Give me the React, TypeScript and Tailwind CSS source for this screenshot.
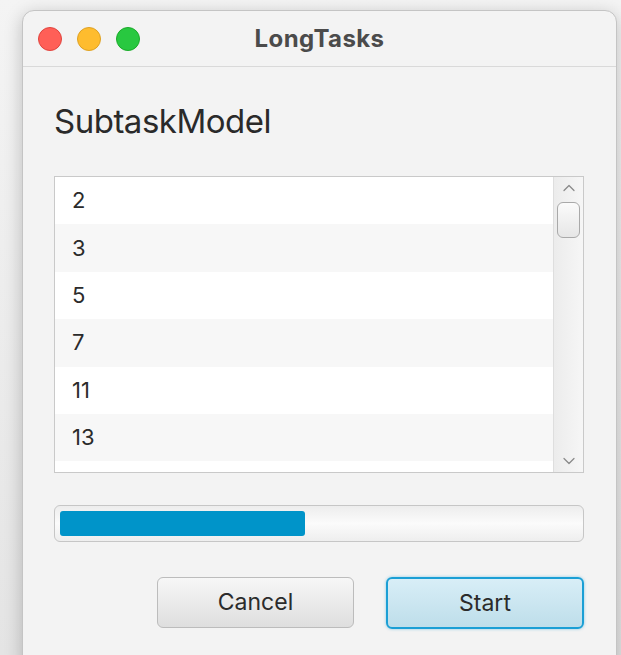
import { ChevronDown, ChevronUp } from 'lucide-react';

const primes = [2, 3, 5, 7, 11, 13];

function TrafficLights() {
  return (
    <div className="flex items-center gap-[15px]">
      <span className="h-6 w-6 rounded-full border border-[#e0443e] bg-[#ff5f57]" />
      <span className="h-6 w-6 rounded-full border border-[#dea123] bg-[#febc2e]" />
      <span className="h-6 w-6 rounded-full border border-[#1aab29] bg-[#28c840]" />
    </div>
  );
}

function PrimeList() {
  return (
    <div className="flex h-[297px] overflow-hidden border border-[#c9c9c9] bg-white">
      <div className="flex-1 overflow-hidden">
        {primes.map((p, i) => (
          <div
            key={p}
            className={`flex h-[47.4px] shrink-0 items-center pl-[17px] text-[22px] text-[#2b2b2b] ${
              i % 2 === 0 ? 'bg-white' : 'bg-[#f7f7f7]'
            }`}
          >
            {p}
          </div>
        ))}
      </div>
      {/* vertical scroll bar */}
      <div className="flex w-[30px] flex-col items-center border-l border-[#dedede] bg-gradient-to-r from-[#ececec] to-[#f6f6f6]">
        <ChevronUp className="mt-[1px] h-5 w-5 text-[#8a8a8a]" strokeWidth={1.5} />
        <div className="mt-[4px] h-[36px] w-[23px] rounded-[6px] border border-[#a9a9a9] bg-gradient-to-b from-[#fbfbfb] to-[#e6e6e6]" />
        <div className="flex-1" />
        <ChevronDown className="mb-[1px] h-5 w-5 text-[#8a8a8a]" strokeWidth={1.5} />
      </div>
    </div>
  );
}

function ProgressBar({ value }: { value: number }) {
  return (
    <div className="h-[37px] rounded-[6px] border border-[#c6c6c6] bg-gradient-to-b from-[#ededed] via-[#fbfbfb] to-[#eeeeee] p-[5px]">
      <div className="h-full rounded-[3px] bg-[#0094c9]" style={{ width: `${value * 100}%` }} />
    </div>
  );
}

export default function App() {
  return (
    <div
      className="h-[655px] w-[621px] overflow-hidden bg-gradient-to-b from-[#f4f4f4] to-[#e4e4e4] pl-[22px] pr-[4px] pt-[10px]"
      style={{ fontFamily: 'Inter, "Liberation Sans", sans-serif' }}
    >
      <div className="flex h-[660px] flex-col rounded-[12px] border border-[#c4c4c4] bg-[#f3f3f3] shadow-[0_4px_18px_rgba(0,0,0,0.22)]">
        {/* title bar */}
        <div className="relative flex h-[56px] shrink-0 items-center border-b border-[#d9d9d9] px-[15px]">
          <TrafficLights />
          <div className="absolute inset-0 flex items-center justify-center text-[24px] font-bold tracking-[0.4px] text-[#4b4b4b]">
            LongTasks
          </div>
        </div>

        <div className="flex flex-col px-[31px] pr-[32px]">
          <div className="mt-[33px] text-[33px] leading-[42px] tracking-[-0.5px] text-[#2a2a2a]">SubtaskModel</div>

          <div className="mt-[34px]">
            <PrimeList />
          </div>

          <div className="mt-[32px]">
            <ProgressBar value={0.473} />
          </div>

          <div className="mt-[35px] flex justify-end gap-[32px]">
            <button className="h-[51px] w-[197px] rounded-[6px] border border-[#bcbcbc] bg-gradient-to-b from-[#f7f7f7] to-[#dedede] text-[23px] text-[#2b2b2b]">
              Cancel
            </button>
            <button className="h-[52px] w-[198px] rounded-[6px] border-2 border-[#1b9fd5] bg-gradient-to-b from-[#d8eef7] to-[#bedeea] text-[23px] text-[#2b2b2b] shadow-[0_0_3px_rgba(27,159,213,0.5)]">
              Start
            </button>
          </div>
        </div>
      </div>
    </div>
  );
}
